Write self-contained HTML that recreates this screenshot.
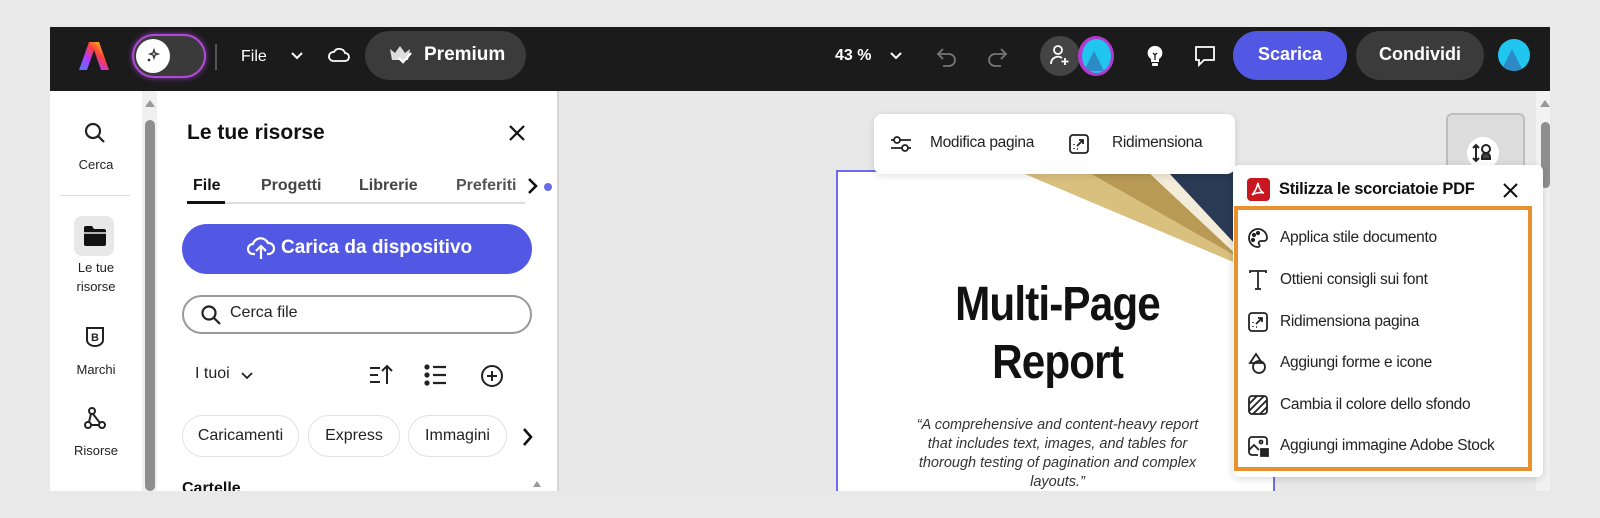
<!DOCTYPE html>
<html><head><meta charset="utf-8"><style>
*{box-sizing:border-box;margin:0;padding:0}
body{width:1600px;height:518px;background:#e9e9e9;font-family:"Liberation Sans",sans-serif;position:relative;overflow:hidden;color:#222}
.a{position:absolute}
.top{left:50px;top:27px;width:1500px;height:64px;background:#1b1b1b}
.wt{color:#fff;font-weight:bold}
.pill{border-radius:30px}
svg{display:block}
.rail{left:50px;top:91px;width:92px;height:400px;background:#fff}
.lbl{font-size:13px;color:#222;text-align:center;width:92px;left:0}
.panel{left:157px;top:91px;width:400px;height:400px;background:#fff;overflow:hidden}
.chip{top:324px;height:42px;border:1.5px solid #e2e2e2;border-radius:21px;font-size:16px;text-align:center;line-height:39px;color:#222}
.canvas{left:559px;top:91px;width:991px;height:400px;background:#e8e8e8;overflow:hidden}
.item{left:1280px;font-size:15.5px;color:#222;letter-spacing:-.3px}
.ic{left:1247px;width:22px;height:22px}
</style></head><body>
<div class="a top">
  <svg class="a" style="left:29px;top:13px" width="30" height="32" viewBox="0 0 30 32">
    <defs><linearGradient id="lg" x1="0" y1="1" x2="1" y2="0"><stop offset="0" stop-color="#4f7bff"/><stop offset=".35" stop-color="#b13cff"/><stop offset=".6" stop-color="#ff3d3d"/><stop offset=".85" stop-color="#ffb020"/><stop offset="1" stop-color="#45e07a"/></linearGradient></defs>
    <path d="M10 2h10l10 28h-8l-7-20-7 20H0z" fill="url(#lg)"/>
  </svg>
  <div class="a pill" style="left:82px;top:7px;width:74px;height:44px;border:2px solid #b04ad8;background:#3a3a3a;box-shadow:0 0 6px #8a3ab0"></div>
  <div class="a" style="left:86px;top:12px;width:34px;height:34px;border-radius:50%;background:#fff"></div>
  <svg class="a" style="left:94px;top:20px" width="18" height="18" viewBox="0 0 18 18" fill="none" stroke="#333" stroke-width="1.4"><path d="M10 3l1 3 3 1-3 1-1 3-1-3-3-1 3-1z"/><path d="M4 12l2 2M6 12l-2 2"/></svg>
  <div class="a" style="left:165px;top:17px;width:2px;height:26px;background:#555"></div>
  <div class="a wt" style="left:191px;top:21px;font-size:16px;font-weight:normal">File</div>
  <svg class="a" style="left:240px;top:24px" width="14" height="10"><path d="M2 2l5 5 5-5" stroke="#fff" stroke-width="2" fill="none"/></svg>
  <svg class="a" style="left:277px;top:18px" width="24" height="20" viewBox="0 0 24 20"><path d="M6 16h12a4 4 0 0 0 0-8 6 6 0 0 0-11-1 4.5 4.5 0 0 0-1 9z" stroke="#fff" stroke-width="1.8" fill="none"/></svg>
  <div class="a pill" style="left:315px;top:4px;width:161px;height:49px;background:#3b3b3b"></div>
  <svg class="a" style="left:338px;top:16px" width="26" height="24" viewBox="0 0 26 24"><path d="M2 6l5 4 5-7 5 7 5-4-2 11H4z" fill="#ddd"/><path d="M11 15l4 4 8-9" stroke="#fff" stroke-width="2.4" fill="none"/></svg>
  <div class="a wt" style="left:374px;top:17px;font-size:19px">Premium</div>
  <div class="a wt" style="left:785px;top:20px;font-size:16px">43 %</div>
  <svg class="a" style="left:839px;top:24px" width="14" height="10"><path d="M2 2l5 5 5-5" stroke="#fff" stroke-width="2" fill="none"/></svg>
  <svg class="a" style="left:885px;top:18px" width="24" height="24" viewBox="0 0 24 24" fill="none" stroke="#777" stroke-width="1.8"><path d="M8 4L3 9l5 5"/><path d="M3 9h11a6 6 0 0 1 0 12H8"/></svg>
  <svg class="a" style="left:935px;top:18px" width="24" height="24" viewBox="0 0 24 24" fill="none" stroke="#777" stroke-width="1.8"><path d="M16 4l5 5-5 5"/><path d="M21 9H10a6 6 0 0 0 0 12h6"/></svg>
  <div class="a" style="left:990px;top:9px;width:40px;height:40px;border-radius:50%;background:#444"></div>
  <svg class="a" style="left:998px;top:17px" width="24" height="24" viewBox="0 0 24 24" fill="none" stroke="#fff" stroke-width="1.8"><circle cx="10" cy="6" r="4"/><path d="M3 20a7 7 0 0 1 11-6"/><path d="M17 14v7M13.5 17.5h7"/></svg>
  <div class="a" style="left:1028px;top:9px;width:36px;height:40px;border-radius:50%;background:#b33ad0"></div>
  <div class="a" style="left:1032px;top:12px;width:29px;height:34px;border-radius:50%;background:#21c6f0;overflow:hidden"><div style="position:absolute;left:2px;top:12px;width:0;height:0;border-left:10px solid transparent;border-right:10px solid transparent;border-bottom:20px solid #2d8ac4"></div></div>
  <svg class="a" style="left:1094px;top:17px" width="22" height="24" viewBox="0 0 22 24"><path d="M11 2a7 7 0 0 0-4 13v3h8v-3a7 7 0 0 0-4-13z" fill="#fff"/><rect x="8" y="19" width="6" height="3" rx="1" fill="#fff"/><path d="M9 9l2 2 2-2M11 11v5" stroke="#1b1b1b" stroke-width="1.3" fill="none"/></svg>
  <svg class="a" style="left:1143px;top:17px" width="24" height="24" viewBox="0 0 24 24" fill="none" stroke="#fff" stroke-width="1.8"><path d="M3 3h18v13H11l-5 5v-5H3z"/></svg>
  <div class="a pill" style="left:1183px;top:4px;width:114px;height:49px;background:#5258e4"></div>
  <div class="a wt" style="left:1183px;top:17px;width:114px;text-align:center;font-size:18px">Scarica</div>
  <div class="a pill" style="left:1306px;top:4px;width:128px;height:49px;background:#3b3b3b"></div>
  <div class="a wt" style="left:1306px;top:17px;width:128px;text-align:center;font-size:18px">Condividi</div>
  <div class="a" style="left:1448px;top:12px;width:32px;height:32px;border-radius:50%;background:#21c6f0;overflow:hidden"><div style="position:absolute;left:3px;top:10px;width:0;height:0;border-left:11px solid transparent;border-right:11px solid transparent;border-bottom:22px solid #2d8ac4"></div></div>
</div>

<div class="a rail">
  <svg class="a" style="left:33px;top:30px" width="24" height="24" viewBox="0 0 24 24" fill="none" stroke="#222" stroke-width="2.2"><circle cx="10" cy="10" r="7"/><path d="M15 15l6 6"/></svg>
  <div class="a lbl" style="top:66px">Cerca</div>
  <div class="a" style="left:10px;top:104px;width:70px;height:1px;background:#ddd"></div>
  <div class="a" style="left:24px;top:125px;width:40px;height:40px;border-radius:8px;background:#e8e8e8"></div>
  <svg class="a" style="left:33px;top:134px" width="24" height="22" viewBox="0 0 24 22"><path d="M1 3a2 2 0 0 1 2-2h6l2 3h10a2 2 0 0 1 2 2v13a2 2 0 0 1-2 2H3a2 2 0 0 1-2-2z" fill="#111"/><path d="M1 8h22" stroke="#e8e8e8" stroke-width="1.5"/></svg>
  <div class="a lbl" style="top:167px;line-height:19px">Le tue<br>risorse</div>
  <svg class="a" style="left:34px;top:234px" width="22" height="24" viewBox="0 0 22 24" fill="none" stroke="#222" stroke-width="2"><path d="M3 3h16v12a8 6 0 0 1-16 0z"/><text x="7" y="16" font-size="11" font-weight="bold" fill="#222" stroke="none" font-family="Liberation Sans">B</text></svg>
  <div class="a lbl" style="top:271px">Marchi</div>
  <svg class="a" style="left:33px;top:315px" width="24" height="24" viewBox="0 0 24 24" fill="none" stroke="#222" stroke-width="2"><circle cx="9" cy="5" r="3"/><circle cx="5" cy="19" r="3"/><circle cx="19" cy="19" r="3"/><path d="M8 8l-2 8M10 8l7 9M8 19h8"/></svg>
  <div class="a lbl" style="top:352px">Risorse</div>
</div>
<div class="a" style="left:142px;top:91px;width:15px;height:400px;background:#f0f0f0"></div>
<div class="a" style="left:145px;top:100px;width:0;height:0;border-left:5px solid transparent;border-right:5px solid transparent;border-bottom:7px solid #999"></div>
<div class="a" style="left:145px;top:120px;width:10px;height:371px;border-radius:5px;background:#8e8e8e"></div>

<div class="a panel">
  <div class="a" style="left:30px;top:30px;font-size:21px;font-weight:bold;color:#111">Le tue risorse</div>
  <svg class="a" style="left:351px;top:33px" width="18" height="18"><path d="M2 2l14 14M16 2L2 16" stroke="#111" stroke-width="2.2"/></svg>
  <div class="a" style="left:36px;top:86px;font-size:16px;font-weight:bold;color:#111">File</div>
  <div class="a" style="left:104px;top:86px;font-size:16px;font-weight:bold;color:#444">Progetti</div>
  <div class="a" style="left:202px;top:86px;font-size:16px;font-weight:bold;color:#444">Librerie</div>
  <div class="a" style="left:299px;top:86px;font-size:16px;font-weight:bold;color:#555;width:62px;overflow:hidden;white-space:nowrap">Preferiti</div>
  <svg class="a" style="left:370px;top:86px" width="12" height="18"><path d="M2 2l7 7-7 7" stroke="#111" stroke-width="2.6" fill="none"/></svg>
  <div class="a" style="left:387px;top:92px;width:8px;height:8px;border-radius:50%;background:#6b6de8"></div>
  <div class="a" style="left:30px;top:111px;width:338px;height:2px;background:#ddd"></div>
  <div class="a" style="left:30px;top:110px;width:38px;height:3px;background:#111"></div>
  <div class="a pill" style="left:25px;top:133px;width:350px;height:50px;background:#5258e4"></div>
  <svg class="a" style="left:90px;top:144px" width="28" height="26" viewBox="0 0 28 26" fill="none" stroke="#fff" stroke-width="2.2"><path d="M8 19H6a5 5 0 0 1 0-10 8 8 0 0 1 15-1 5 5 0 0 1 1 11h-2"/><path d="M14 24V12M9 16l5-5 5 5"/></svg>
  <div class="a wt" style="left:124px;top:146px;font-size:19px">Carica da dispositivo</div>
  <div class="a pill" style="left:25px;top:204px;width:350px;height:39px;border:2px solid #999"></div>
  <svg class="a" style="left:43px;top:213px" width="22" height="22" viewBox="0 0 22 22" fill="none" stroke="#222" stroke-width="2.2"><circle cx="9" cy="9" r="6.5"/><path d="M14 14l6 6"/></svg>
  <div class="a" style="left:73px;top:213px;font-size:16px;color:#222">Cerca file</div>
  <div class="a" style="left:38px;top:274px;font-size:16px;color:#222">I tuoi</div>
  <svg class="a" style="left:83px;top:280px" width="14" height="10"><path d="M2 2l5 5 5-5" stroke="#222" stroke-width="1.8" fill="none"/></svg>
  <svg class="a" style="left:212px;top:272px" width="26" height="24" viewBox="0 0 26 24" stroke="#222" stroke-width="2" fill="none"><path d="M1 5h10M1 12h8M1 19h10M18 21V3M13 8l5-5 5 5"/></svg>
  <svg class="a" style="left:267px;top:273px" width="24" height="22" viewBox="0 0 24 22" stroke="#222" stroke-width="2.2" fill="#222"><circle cx="3" cy="3" r="1.5"/><circle cx="3" cy="11" r="1.5"/><circle cx="3" cy="19" r="1.5"/><path d="M9 3h13M9 11h13M9 19h13" fill="none"/></svg>
  <svg class="a" style="left:323px;top:273px" width="24" height="24" viewBox="0 0 24 24" stroke="#222" stroke-width="2" fill="none"><circle cx="12" cy="12" r="10"/><path d="M12 7v10M7 12h10"/></svg>
  <div class="a chip" style="left:25px;width:117px">Caricamenti</div>
  <div class="a chip" style="left:151px;width:92px">Express</div>
  <div class="a chip" style="left:251px;width:99px">Immagini</div>
  <svg class="a" style="left:365px;top:336px" width="12" height="20"><path d="M2 2l7 8-7 8" stroke="#111" stroke-width="2.6" fill="none"/></svg>
  <div class="a" style="left:25px;top:389px;font-size:16px;font-weight:bold;color:#111">Cartelle</div>
  <div class="a" style="left:376px;top:390px;width:0;height:0;border-left:4px solid transparent;border-right:4px solid transparent;border-bottom:6px solid #999"></div>
</div>
<div class="a" style="left:557px;top:91px;width:2px;height:400px;background:#d6d6d6"></div>

<div class="a canvas">
  <div class="a" style="left:277px;top:79px;width:439px;height:330px;background:#fff;border:2px solid #6b6de8;overflow:hidden">
    <svg class="a" style="left:0;top:0" width="439" height="120" viewBox="0 0 439 120">
      <polygon points="330,0 439,0 439,70 400,85" fill="#2a3954"/>
      <polygon points="182,0 330,0 410,88 400,92" fill="#d9c07e"/>
      <polygon points="250,0 320,0 405,88" fill="#b99a55"/>
      <polygon points="310,0 330,0 412,88 405,89" fill="#f3ecd8"/>
    </svg>
    <div class="a" style="left:0;top:104px;width:439px;text-align:center;font-size:48px;font-weight:bold;color:#111;line-height:58px;letter-spacing:-1px;transform:scaleX(.88);transform-origin:center">Multi-Page<br>Report</div>
    <div class="a" style="left:10px;top:244px;width:419px;text-align:center;font-size:14.5px;font-style:italic;color:#333;line-height:19px">“A comprehensive and content-heavy report<br>that includes text, images, and tables for<br>thorough testing of pagination and complex<br>layouts.”</div>
  </div>
  <div class="a" style="left:315px;top:23px;width:361px;height:60px;background:#fff;border-radius:8px;box-shadow:0 2px 8px rgba(0,0,0,.12)"></div>
  <svg class="a" style="left:331px;top:44px" width="22" height="18" viewBox="0 0 22 18" stroke="#222" stroke-width="1.8" fill="#fff"><path d="M1 5h20M1 13h20"/><circle cx="7" cy="5" r="3"/><circle cx="15" cy="13" r="3"/></svg>
  <div class="a" style="left:371px;top:43px;font-size:15.5px;color:#222;letter-spacing:-.3px">Modifica pagina</div>
  <svg class="a" style="left:509px;top:42px" width="22" height="22" viewBox="0 0 22 22" fill="none" stroke="#222" stroke-width="1.8"><rect x="2" y="2" width="18" height="18" rx="3"/><path d="M9 13l6-6M11 7h4v4"/><path d="M6 11v1M6 15v1M9 16h1" stroke-width="1.5"/></svg>
  <div class="a" style="left:553px;top:43px;font-size:15.5px;color:#222;letter-spacing:-.3px">Ridimensiona</div>
  <div class="a" style="left:887px;top:22px;width:79px;height:90px;background:#dcdcdc;border:2px solid #bdbdbd;border-radius:6px"></div>
  <div class="a" style="left:908px;top:46px;width:32px;height:32px;border-radius:50%;background:#fff"></div>
  <svg class="a" style="left:913px;top:52px" width="22" height="20" viewBox="0 0 22 20" stroke="#222" stroke-width="2" fill="none"><path d="M4 2v16M1 5l3-3 3 3M1 15l3 3 3-3"/><circle cx="14" cy="6" r="4"/><path d="M10 14a4 4 0 0 1 8 0v2h-8z" fill="#444"/></svg>
  <div class="a" style="left:977px;top:0;width:14px;height:400px;background:#f2f2f2"></div>
  <div class="a" style="left:981px;top:9px;width:0;height:0;border-left:5px solid transparent;border-right:5px solid transparent;border-bottom:7px solid #999"></div>
  <div class="a" style="left:982px;top:31px;width:9px;height:66px;border-radius:5px;background:#8e8e8e"></div>
</div>

<div class="a" style="left:1233px;top:165px;width:310px;height:312px;background:#fff;border-radius:6px;box-shadow:0 2px 8px rgba(0,0,0,.15)"></div>
<div class="a" style="left:1247px;top:178px;width:23px;height:23px;border-radius:4px;background:#c8171e"></div>
<svg class="a" style="left:1250px;top:181px" width="17" height="17" viewBox="0 0 17 17" fill="none" stroke="#fff" stroke-width="1.6"><path d="M8 2c-1 4-3 9-6 12 3-2 8-3 12-2-3-1-5-5-6-10z"/></svg>
<div class="a" style="left:1279px;top:180px;font-size:16.5px;font-weight:bold;color:#111;letter-spacing:-.3px">Stilizza le scorciatoie PDF</div>
<svg class="a" style="left:1502px;top:182px" width="17" height="17"><path d="M2 2l13 13M15 2L2 15" stroke="#111" stroke-width="2"/></svg>
<div class="a" style="left:1234px;top:206px;width:298px;height:265px;border:4px solid #e8912e"></div>
<svg class="a ic" style="top:227px" viewBox="0 0 22 22" fill="none" stroke="#222" stroke-width="1.8"><path d="M11 2a9 9 0 1 0 0 18c2 0 2-2 1-3s0-3 2-3h3a3 3 0 0 0 3-3 9 9 0 0 0-9-9z"/><circle cx="7" cy="8" r="1.2" fill="#222"/><circle cx="11" cy="6" r="1.2" fill="#222"/><circle cx="6" cy="13" r="1.2" fill="#222"/></svg>
<div class="a item" style="top:229px">Applica stile documento</div>
<svg class="a ic" style="top:269px" viewBox="0 0 22 22" fill="none" stroke="#222" stroke-width="1.8"><path d="M3 4V2h16v2M11 2v18M8 20h6"/></svg>
<div class="a item" style="top:271px">Ottieni consigli sui font</div>
<svg class="a ic" style="top:311px" viewBox="0 0 22 22" fill="none" stroke="#222" stroke-width="1.8"><rect x="2" y="2" width="18" height="18" rx="3"/><path d="M9 13l6-6M11 7h4v4"/><path d="M6 11v1M6 15v1M9 16h1" stroke-width="1.5"/></svg>
<div class="a item" style="top:313px">Ridimensiona pagina</div>
<svg class="a ic" style="top:352px" viewBox="0 0 22 22" fill="none" stroke="#222" stroke-width="1.8"><path d="M9 2L3 11h12z"/><circle cx="12" cy="15" r="6"/></svg>
<div class="a item" style="top:354px">Aggiungi forme e icone</div>
<svg class="a ic" style="top:394px" viewBox="0 0 22 22" fill="none" stroke="#222" stroke-width="1.8"><rect x="2" y="2" width="18" height="18" rx="3"/><path d="M2 10l8-8M2 17L17 2M6 20L20 6M13 20l7-7"/></svg>
<div class="a item" style="top:396px">Cambia il colore dello sfondo</div>
<svg class="a ic" style="top:435px" viewBox="0 0 22 22" fill="none" stroke="#222" stroke-width="1.8"><path d="M11 20H5a3 3 0 0 1-3-3V5a3 3 0 0 1 3-3h12a3 3 0 0 1 3 3v5"/><path d="M2 15l5-5 5 5"/><circle cx="14" cy="7" r="1.5"/><rect x="14" y="14" width="7" height="7" fill="#222"/></svg>
<div class="a item" style="top:437px">Aggiungi immagine Adobe Stock</div>
</body></html>
